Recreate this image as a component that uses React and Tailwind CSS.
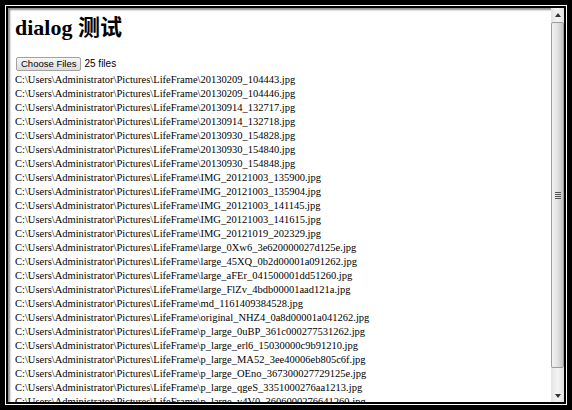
const files = [
  '20130209_104443.jpg',
  '20130209_104446.jpg',
  '20130914_132717.jpg',
  '20130914_132718.jpg',
  '20130930_154828.jpg',
  '20130930_154840.jpg',
  '20130930_154848.jpg',
  'IMG_20121003_135900.jpg',
  'IMG_20121003_135904.jpg',
  'IMG_20121003_141145.jpg',
  'IMG_20121003_141615.jpg',
  'IMG_20121019_202329.jpg',
  'large_0Xw6_3e620000027d125e.jpg',
  'large_45XQ_0b2d00001a091262.jpg',
  'large_aFEr_041500001dd51260.jpg',
  'large_FlZv_4bdb00001aad121a.jpg',
  'md_1161409384528.jpg',
  'original_NHZ4_0a8d00001a041262.jpg',
  'p_large_0uBP_361c000277531262.jpg',
  'p_large_erl6_15030000c9b91210.jpg',
  'p_large_MA52_3ee40006eb805c6f.jpg',
  'p_large_OEno_367300027729125e.jpg',
  'p_large_qgeS_3351000276aa1213.jpg',
  'p_large_v4V0_3606000276641260.jpg',
];

function Scrollbar() {
  return (
    <div className="flex w-[13px] flex-col bg-gradient-to-r from-[#e4e4e4] via-[#f4f4f4] to-[#e0e0e0]">
      <div className="flex h-[14px] items-center justify-center">
        <svg width="6" height="4" viewBox="0 0 6 4">
          <path d="M0 4 L3 0 L6 4 Z" fill="#333" />
        </svg>
      </div>
      <div className="flex h-[346px] items-center justify-center rounded-[2px] border border-[#9c9c9c] bg-gradient-to-r from-[#f2f2f2] via-[#e2e2e2] to-[#c4c4c4]">
        <div className="flex flex-col gap-[1px]">
          <div className="h-[1px] w-[6px] bg-[#555]" />
          <div className="h-[1px] w-[6px] bg-[#555]" />
          <div className="h-[1px] w-[6px] bg-[#555]" />
          <div className="h-[1px] w-[6px] bg-[#555]" />
        </div>
      </div>
      <div className="flex-1" />
      <div className="flex h-[12px] items-center justify-center">
        <svg width="6" height="4" viewBox="0 0 6 4">
          <path d="M0 0 L6 0 L3 4 Z" fill="#333" />
        </svg>
      </div>
    </div>
  );
}

export default function App() {
  return (
    <div className="h-[410px] w-[572px] bg-black p-[5px]">
      <div className="h-full w-full border border-white">
        <div className="h-full w-full border-2 border-black">
          <div className="flex h-full w-full overflow-hidden bg-white shadow-[inset_2px_2px_2px_rgba(0,0,0,0.45)]">
            <div className="min-w-0 flex-1 overflow-hidden pl-[7px] font-['Liberation_Serif','Times_New_Roman',serif] text-black">
              <h1 className="mt-[6px] font-['Liberation_Serif','Noto_Sans_CJK_SC',serif] text-[22px] leading-[28px] font-bold">
                dialog 测试
              </h1>
              <div className="mt-[15px] flex h-[14px] items-center gap-[3px] pl-[1px] font-['Liberation_Sans',Arial,sans-serif]">
                <button className="flex h-[14px] items-center rounded-[2px] border border-[#a3a3a3] bg-gradient-to-b from-[#f6f6f6] to-[#dcdcdc] px-[4px] text-[9.5px] leading-none text-black">
                  Choose Files
                </button>
                <span className="text-[10px] leading-none">25 files</span>
              </div>
              <div className="mt-[2px] text-[10.5px] leading-[14px] whitespace-nowrap">
                {files.map((f) => (
                  <div key={f}>C:\Users\Administrator\Pictures\LifeFrame\{f}</div>
                ))}
              </div>
            </div>
            <Scrollbar />
          </div>
        </div>
      </div>
    </div>
  );
}
